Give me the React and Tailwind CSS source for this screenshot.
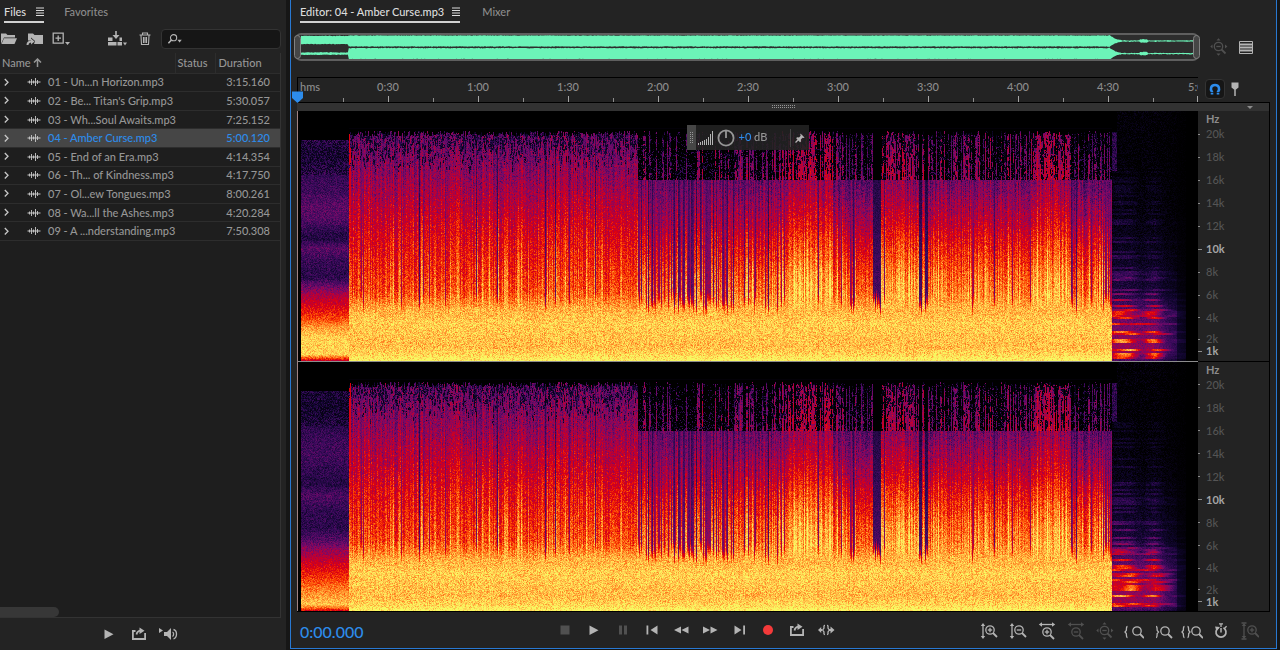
import React, { useEffect, useRef, useState } from 'react';

const files = [
  { name: '01 - Un...n Horizon.mp3', duration: '3:15.160' },
  { name: "02 - Be... Titan's Grip.mp3", duration: '5:30.057' },
  { name: '03 - Wh...Soul Awaits.mp3', duration: '7:25.152' },
  { name: '04 - Amber Curse.mp3', duration: '5:00.120' },
  { name: '05 - End of an Era.mp3', duration: '4:14.354' },
  { name: '06 - Th... of Kindness.mp3', duration: '4:17.750' },
  { name: '07 - Ol...ew Tongues.mp3', duration: '8:00.261' },
  { name: '08 - Wa...ll the Ashes.mp3', duration: '4:20.284' },
  { name: '09 - A ...nderstanding.mp3', duration: '7:50.308' },
];

const times = ['0:30', '1:00', '1:30', '2:00', '2:30', '3:00', '3:30', '4:00', '4:30'];
const freqs = ['20k', '18k', '16k', '14k', '12k', '10k', '8k', '6k', '4k'];

/* ---------- spectrogram ---------- */

const W = 900;
const H = 250;

const palette = [
  [0, 0, 0, 0],
  [0.12, 16, 6, 46],
  [0.25, 58, 10, 92],
  [0.38, 118, 10, 106],
  [0.5, 182, 0, 58],
  [0.6, 220, 0, 16],
  [0.7, 250, 62, 0],
  [0.8, 255, 130, 36],
  [0.9, 255, 196, 74],
  [0.97, 255, 232, 96],
  [1, 246, 250, 96],
];

const interp = (stops, t) => {
  if (t <= stops[0][0]) return stops[0][1];
  for (let i = 1; i < stops.length; i++) {
    if (t <= stops[i][0]) {
      const [a, va] = stops[i - 1];
      const [b, vb] = stops[i];
      return va + ((vb - va) * (t - a)) / (b - a);
    }
  }
  return stops[stops.length - 1][1];
};

const clamp = (v) => Math.max(0, Math.min(1, v));

const lut = Array.from({ length: 256 }, (_, i) =>
  [1, 2, 3].map((c) => interp(palette.map((p) => [p[0], p[c]]), i / 255))
);

const random = (seed) => () => {
  seed = (seed + 0x6d2b79f5) | 0;
  let t = Math.imul(seed ^ (seed >>> 15), 1 | seed);
  t = (t + Math.imul(t ^ (t >>> 7), 61 | t)) ^ t;
  return ((t ^ (t >>> 14)) >>> 0) / 4294967296;
};

// level per row while the band is playing
const body = [[20, 0.34], [45, 0.39], [65, 0.43], [85, 0.49], [105, 0.54], [130, 0.6], [160, 0.66], [180, 0.71], [190, 0.79], [198, 0.87], [212, 0.92], [235, 0.89], [243, 0.93], [249, 1]];
const introL = [[26, 0.24], [44, 0.16], [60, 0.23], [80, 0.25], [95, 0.32], [108, 0.3], [122, 0.19], [128, 0.18], [137, 0.32], [150, 0.23], [166, 0.2], [174, 0.34], [184, 0.48], [198, 0.62], [208, 0.72], [216, 0.84], [226, 0.92], [243, 0.93], [247, 0.7], [249, 0.55]];
const introR = [[26, 0.2], [44, 0.14], [60, 0.19], [80, 0.25], [95, 0.26], [108, 0.21], [122, 0.18], [134, 0.29], [150, 0.21], [166, 0.2], [178, 0.3], [190, 0.44], [204, 0.58], [214, 0.66], [222, 0.74], [232, 0.82], [243, 0.9], [247, 0.74], [249, 0.6]];

// [start, end, gain, chance of a quiet column, treble density]
const sections = [
  [52, 341, 0, 0.05, 1],
  [341, 437, -0.03, 0.55, 0.5],
  [437, 484, -0.05, 0.1, 0.6],
  [484, 535, 0.03, 0.03, 0.9],
  [535, 575, -0.06, 0.25, 0.5],
  [575, 583, 0, 1, 0],
  [583, 621, 0.03, 0.03, 0.85],
  [621, 624, 0, 1, 0.1],
  [624, 627, 0, 0, 0.6],
  [627, 630, 0, 1, 0.1],
  [630, 735, -0.03, 0.08, 0.55],
  [735, 773, 0.04, 0.01, 0.9],
  [773, 814, -0.07, 0.3, 0.5],
];

const drawSpectrogram = (ctx, right) => {
  const rnd = random(right ? 91 : 17);
  const cols = random(404);
  const img = ctx.createImageData(W, H);
  const intro = right ? introR : introL;

  const harmonics = Array.from({ length: H }, () => rnd());
  const bursts = [[813, 842, 0.16], [847, 858, 0.1], [853, 868, 0.12]];

  for (let x = 0; x < W; x++) {
    const s = sections.find((sec) => x >= sec[0] && x < sec[1]);
    const tone = (cols() - 0.5) * 0.16;
    const quiet = s ? cols() < s[3] : false;
    const full = s && s[3] === 1;
    const beat = s && ((x - 52) % 12 < 2 || cols() < 0.25) && cols() < 0.75 ? 0.05 + cols() * 0.1 : 0;
    const late = x >= 341;
    const tall = s ? cols() < s[4] : false;
    const sparse = cols();
    const top = 20 + Math.floor(cols() * 6);
    const quietBase = full ? 0.12 : 0.14 + cols() * 0.22;
    const quietEnd = 176 + cols() * 16;
    let run = 0;
    let gap = false;

    for (let y = 0; y < H; y++) {
      let v = 0;
      const n = rnd() + rnd() - 1;
      if (x < 4) {
        v = 0;
      } else if (x < 52) {
        if (y > 28) v = interp(intro, y) + n * 0.11;
        if (y > 28 && y < 64 && rnd() < 0.35) v *= 0.4;
      } else if (s) {
        if (y >= top) {
          const low = clamp((y - 182) / 18);
          v = interp(body, y) + tone * (1 - low * 0.85) + n * 0.13;
          v += s[2] * (1 - low);
          // fuller mids after the first verse
          if (late) v += 0.1 * clamp((y - 115) / 50) * (1 - low) - 0.05 * clamp((120 - y) / 40);
          v += beat * clamp((y - 80) / 80) * (1 - low);
          if (x < 54) v = Math.max(v, 0.6);
          if (quiet) {
            const q = quietBase + (y / H) * 0.22 + n * 0.07;
            const mix = clamp((y - quietEnd) / 14);
            v = q * (1 - mix) + v * mix;
          }
          // holes in the treble
          if (run <= 0) {
            const depth = late ? 0.25 + sparse * 0.65 - (y - 20) / 140 : 0.62 - (y - 20) / 62;
            gap = rnd() < depth;
            run = 1 + Math.floor(rnd() * 6);
          }
          run--;
          if (late && y < 69) {
            if (full) v = 0;
            else if (!tall || quiet) v = rnd() < 0.06 + (y - 20) / 200 ? 0.1 + rnd() * 0.18 : 0;
            else if (gap && rnd() < 0.85) v = rnd() * 0.12;
            else v += 0.08;
          } else if (!late && gap && rnd() < 0.86) {
            v *= 0.1 + rnd() * 0.5;
          }
        } else if (y === 17) {
          v = 0.02;
        }
      } else if (x < 819 && y < 60) {
        v = y > 20 ? 0.2 + n * 0.14 : 0;
      } else if (x < 888) {
        const fade = x < 855 ? 1 : Math.max(0, 1 - (x - 855) / 34);
        const low = interp([[60, 0.01], [100, 0.03], [150, 0.08], [180, 0.14], [200, 0.3], [225, 0.38], [240, 0.42], [249, 0.25]], y);
        const line = harmonics[y - (y % 2)];
        v = low + n * 0.08;
        if (line > 0.62) v += low * 0.7 * (0.5 + 0.5 * Math.sin(x / 5 + line * 40));
        bursts.forEach(([a, b, g]) => {
          if (x >= a && x < b && y > 56) v += g * (line > 0.55 ? 1 : 0.15) * (y / 200) * clamp((x - a) / 5 + 0.3) * clamp((b - x) / 10);
        });
        v *= 0.25 + fade * 0.75;
        if (x > 878) v *= 0.6;
      }
      const [r, g, b] = lut[Math.round(clamp(v) * 255)];
      const i = (y * W + x) * 4;
      img.data[i] = r;
      img.data[i + 1] = g;
      img.data[i + 2] = b;
      img.data[i + 3] = 255;
    }
  }
  ctx.putImageData(img, 0, 0);
};

const Spectrogram = ({ right, label }) => {
  const ref = useRef(null);
  useEffect(() => {
    drawSpectrogram(ref.current.getContext('2d'), right);
  }, [right]);
  return (
    <canvas
      ref={ref}
      width={W}
      height={H}
      role="img"
      aria-label={label}
      className="block h-full w-full [image-rendering:pixelated]"
    />
  );
};

const FrequencyAxis = () => (
  <div className="flex h-full flex-col text-[11px] text-[#555]">
    <div className="h-3 pl-2 leading-4 font-bold text-[#8c8c8c]">Hz</div>
    {freqs.map((f) => (
      <div key={f} className={`flex flex-1 items-center ${f === '10k' ? 'font-bold text-[#a5a5a5]' : ''}`}>
        <span className={`h-px bg-[#8c8c8c] ${f === '10k' ? 'w-1' : 'w-0.5'}`} />
        <span className={`leading-3 ${f === '10k' ? 'pl-1' : 'pl-1.5'}`}>{f}</span>
      </div>
    ))}
    <div className="h-[31px] pt-1">
      <div className="flex h-3 items-center">
        <span className="h-px w-0.5 bg-[#8c8c8c]" />
        <span className="pl-1.5 leading-3">2k</span>
      </div>
      <div className="flex h-3 items-center font-bold text-[#a5a5a5]">
        <span className="h-px w-1 bg-[#8c8c8c]" />
        <span className="pl-1 leading-3">1k</span>
      </div>
    </div>
  </div>
);

/* ---------- overview ---------- */

const overviewPaths = () => {
  const rnd = random(5);
  const band = (mid, half) => {
    const up = [];
    const down = [];
    for (let x = 0; x <= 896; x += 1) {
      const h = half(x);
      up.push(`${x},${(mid(x) - h - rnd() * 0.6).toFixed(1)}`);
      down.unshift(`${x},${(mid(x) + h + rnd() * 0.6).toFixed(1)}`);
    }
    return `M${up.join('L')}L${down.join('L')}Z`;
  };
  const tail = (x) => {
    if (x < 824) return 5.2 * ((824 - x) / 13) ** 2 + 0.6;
    if (x > 841 && x < 850) return 1.3;
    return 0.3;
  };
  return [
    band((x) => (x < 48 ? 5 : 6), (x) => (x < 48 ? 3.8 : x < 811 ? 5.2 : tail(x))),
    band(() => 18.6, (x) => (x < 48 ? 0.9 : x < 811 ? 5.2 : tail(x))),
  ];
};

const [topBand, bottomBand] = overviewPaths();

/* ---------- icons ---------- */

const Icon = ({ w = 18, h = 18, children }) => (
  <svg width={w} height={h} viewBox={`0 0 ${w} ${h}`} fill="none" stroke="currentColor" strokeWidth="1.3" aria-hidden="true">
    {children}
  </svg>
);

const Burger = () => (
  <Icon w={8} h={9}>
    <path d="M0 1h8M0 3.500h8M0 6h8M0 8.500h8" strokeWidth="1" />
  </Icon>
);

const Lens = ({ x = 9, y = 8, sign }) => (
  <g>
    <circle cx={x} cy={y} r="4.2" />
    <path d={`M${x + 3} ${y + 3}l4 4`} strokeWidth="1.8" />
    {sign && <path d={`M${x - 2.2} ${y}h4.4`} />}
    {sign === '+' && <path d={`M${x} ${y - 2.2}v4.4`} />}
  </g>
);

const VArrow = () => (
  <>
    <path d="M3 3v12" />
    <path d="M0.8 4L3 1l2.2 3zM0.8 14L3 17l2.2-3z" fill="currentColor" stroke="none" />
  </>
);

const HArrow = () => (
  <>
    <path d="M3 2.500h12" />
    <path d="M4 0.2L0.8 2.500 4 4.8zM14 0.2l3.2 2.3L14 4.8z" fill="currentColor" stroke="none" />
  </>
);

const ZoomFull = () => (
  <Icon>
    <Lens x={8.5} y={8.5} sign="-" />
    <path d="M6.5 2.500L8.500 0.3l2 2.2zM6.500 15.500l2 2.2 2-2.2zM2.500 6.500L0.3 8.500l2.2 2zM15 6.500l2.4 2-2.4 2z" fill="currentColor" stroke="none" />
  </Icon>
);

const Play = () => (
  <Icon>
    <path d="M4.5 4.500v9.500l9-4.750z" fill="currentColor" stroke="none" />
  </Icon>
);

const Loop = () => (
  <Icon>
    <path d="M5.500 6H2.900v8h12.200V8" strokeWidth="1.800" />
    <path d="M6.500 9.500c.5-2.500 1.500-3.800 4.500-3.800" strokeWidth="1.800" />
    <path d="M9.500 2.500l5 3.300-5 3.300z" fill="currentColor" stroke="none" />
  </Icon>
);

const Wave = () => (
  <Icon w={14} h={12}>
    <path d="M0.500 6h13" strokeWidth="1" />
    <path d="M2.500 4.500v3M4.500 3v6M6.500 4.500v3M8.500 2v8M10.500 4v4" strokeWidth="0.900" />
  </Icon>
);

const transport = [
  { label: 'Stop', off: true, icon: <Icon><path d="M4.500 4.500h9v9h-9z" fill="currentColor" stroke="none" /></Icon> },
  { label: 'Play', icon: <Play /> },
  { label: 'Pause', off: true, icon: <Icon><path d="M5 4.500h3v9H5zM10 4.500h3v9h-3z" fill="currentColor" stroke="none" /></Icon> },
  { label: 'Move to previous', icon: <Icon><path d="M3.500 4.500h1.800v9H3.500zM14.500 4.500v9l-7-4.500z" fill="currentColor" stroke="none" /></Icon> },
  { label: 'Rewind', icon: <Icon><path d="M9 5.500v7L2 9zM16.500 5.500v7l-7-3.500z" fill="currentColor" stroke="none" /></Icon> },
  { label: 'Fast forward', icon: <Icon><path d="M2 5.500v7l7-3.500zM9.500 5.500v7l7-3.500z" fill="currentColor" stroke="none" /></Icon> },
  { label: 'Move to next', icon: <Icon><path d="M4.500 4.500v9l7-4.500zM13.200 4.500H15v9h-1.800z" fill="currentColor" stroke="none" /></Icon> },
  { label: 'Record', icon: <Icon><circle cx="9" cy="9" r="5" fill="#f43a3a" stroke="none" /></Icon> },
  { label: 'Loop playback', icon: <Loop /> },
  {
    label: 'Skip selection',
    icon: (
      <Icon>
        <path d="M3 9h2M12 9h3" strokeWidth="1.800" />
        <path d="M4.200 6L1 9l3.200 3zM13.500 5.500L17.500 9l-4 3.500z" fill="currentColor" stroke="none" />
        <path d="M8 4.500c-1.500 0-1 1-1 2.500L5.700 9 7 11c0 1.500-.5 2.500 1 2.500M10 4.500c1.500 0 1 1 1 2.500l1.300 2-1.300 2c0 1.500.5 2.500-1 2.500" />
      </Icon>
    ),
  },
];

const zooms = [
  { label: 'Zoom in amplitude', icon: <Icon><VArrow /><Lens x={10} y={8} sign="+" /></Icon> },
  { label: 'Zoom out amplitude', icon: <Icon><VArrow /><Lens x={10} y={8} sign="-" /></Icon> },
  { label: 'Zoom in time', icon: <Icon><HArrow /><Lens x={9} y={10} sign="+" /></Icon> },
  { label: 'Zoom out time', off: true, icon: <Icon><HArrow /><Lens x={9} y={10} sign="-" /></Icon> },
  { label: 'Zoom out full', off: true, icon: <ZoomFull /> },
  { label: 'Zoom to in point', icon: <Icon w={20}><path d="M3.500 4.500C2 4.500 2.600 7 2.300 8.500L1 10l1.300 1.500c.3 1.500-.3 4 1.200 4" /><Lens x={13} y={9} /></Icon> },
  { label: 'Zoom to out point', icon: <Icon w={20}><path d="M3 4.500c1.500 0 .9 2.500 1.200 4L5.500 10l-1.300 1.500c-.3 1.500.3 4-1.200 4" /><Lens x={12} y={9} /></Icon> },
  { label: 'Zoom to selection', icon: <Icon w={22}><path d="M3.500 4.500C2 4.500 2.600 7 2.300 8.500L1 10l1.300 1.500c.3 1.500-.3 4 1.200 4M6.500 4.500c1.500 0 .9 2.500 1.200 4L9 10l-1.300 1.500c-.3 1.500.3 4-1.200 4" /><Lens x={15} y={9} /></Icon> },
  {
    label: 'Zoom timer',
    icon: (
      <Icon>
        <path d="M6.500 5.800a5 5 0 1 0 5 0" strokeWidth="1.700" />
        <path d="M9 6v4.500" strokeWidth="1.500" />
        <path d="M9 2v3M7 1.800h4M12.800 6l1.800-1.800" />
        <path d="M3 4.500l5 .5-3.500 4z" fill="currentColor" stroke="none" />
      </Icon>
    ),
  },
  { label: 'Zoom in track', off: true, icon: <Icon><VArrow /><path d="M0.500 1h5M0.500 17h5" /><Lens x={11} y={8} sign="+" /></Icon> },
];

const IconButton = ({ label, off, className = '', children }) => (
  <button type="button" aria-label={label} disabled={off} className={`flex items-center justify-center ${off ? 'text-[#505050]' : 'text-[#b4b4b4]'} ${className}`}>
    {children}
  </button>
);

const Tab = ({ active, children }) => (
  <button
    type="button"
    className={`flex h-[23px] items-center border-b-2 pt-0.5 ${active ? 'border-[#d2d2d2] text-[#dcdcdc]' : 'border-transparent text-[#8c8c8c]'}`}
  >
    {children}
  </button>
);

/* ---------- panels ---------- */

const FilesPanel = () => {
  const [selected, setSelected] = useState(3);
  const [query, setQuery] = useState('');

  return (
    <aside className="flex w-[286px] shrink-0 flex-col bg-[#232323]">
      <nav className="flex gap-5 pl-1">
        <Tab active><span className="mr-2.5">Files</span><Burger /></Tab>
        <Tab>Favorites</Tab>
      </nav>

      <div className="flex h-[30px] items-center pt-0.5 pr-[5px]">
        <IconButton label="Open file" className="w-[18px]">
          <Icon>
            <path d="M1 14V3.500h5L7.500 5H15v2.500H4z" fill="currentColor" stroke="none" />
            <path d="M4 8.200h13L14.500 14H1.500z" fill="currentColor" stroke="none" />
          </Icon>
        </IconButton>
        <IconButton label="Import file" className="ml-2 w-[18px]">
          <Icon>
            <path d="M2 3.500h5L8.500 5H17v9H8l1-3-4-3.500v3H2z" fill="currentColor" stroke="none" />
            <path d="M1.500 15c0-2.500 1.500-3.500 4-3.500" strokeWidth="2" />
            <path d="M5 8.500l3.500 3-3.500 3z" fill="currentColor" stroke="none" />
          </Icon>
        </IconButton>
        <IconButton label="New file" className="ml-2 w-[18px]">
          <Icon>
            <path d="M1.200 3.200h10v10h-10zM6.200 5.500v5.500M3.500 8.200H9" />
            <path d="M13 12h5l-2.500 3z" fill="currentColor" stroke="none" />
          </Icon>
        </IconButton>
        <IconButton label="Insert into multitrack" className="ml-auto w-5">
          <Icon w={20}>
            <path d="M1 7.500h4.500v3.500h7V7.500H15V11H1zM1 12h8.500v3.500H1zM10.500 12H15v3.500h-4.500z" fill="currentColor" stroke="none" />
            <path d="M9 1v5" strokeWidth="1.600" />
            <path d="M5.500 5h7L9 9z" fill="currentColor" stroke="none" />
            <path d="M16 12.500h4l-2 3z" fill="currentColor" stroke="none" />
          </Icon>
        </IconButton>
        <IconButton label="Delete" className="ml-[10px] w-4">
          <Icon w={14}>
            <path d="M1.500 5h11M4.500 4.500V3h5v1.500M3 5.500l.5 9h7l.5-9M5.500 7v6M7 7v6M8.500 7v6" strokeWidth="1.100" />
          </Icon>
        </IconButton>
        <label className="ml-2 flex h-5 w-[120px] items-center rounded-sm border border-[#333] bg-[#161616] pl-1.5 text-[#b4b4b4]">
          <Icon w={17} h={14}>
            <circle cx="6.500" cy="5.500" r="3.600" />
            <path d="M4 8.200L0.500 12" strokeWidth="1.800" />
            <path d="M11 8h5l-2.500 3z" fill="currentColor" stroke="none" />
          </Icon>
          <input
            type="text"
            aria-label="Search files"
            value={query}
            onChange={(e) => setQuery(e.target.value)}
            className="w-full min-w-0 bg-transparent px-1 outline-none"
          />
        </label>
      </div>

      <div className="mr-[5px] flex flex-1 flex-col border-r border-b border-[#333] bg-[#1e1e1e]">
        <table className="h-[188px] w-full table-fixed border-collapse text-[#969696]">
          <thead>
            <tr className="h-5 bg-[#232323] text-left">
              <th className="w-[175px] border-r border-[#2d2d2d] p-0 pl-0.5 font-medium">
                <span className="flex items-center gap-0.5">
                  Name
                  <Icon w={9} h={9}><path d="M4.500 1v8M1 4.500L4.500 1 8 4.500" strokeWidth="1.500" /></Icon>
                </span>
              </th>
              <th className="w-10 border-r border-[#2d2d2d] p-0 pl-0.5 font-medium">Status</th>
              <th className="p-0 pl-[3px] font-medium">Duration</th>
            </tr>
          </thead>
          <tbody>
            {files.map((f, i) => (
              <tr
                key={f.name}
                onClick={() => setSelected(i)}
                aria-selected={selected === i}
                className={`border-y border-[#2d2d2d] leading-4 ${selected === i ? 'bg-[#464646] text-[#2d8ceb]' : ''}`}
              >
                <td className="p-0" colSpan={2}>
                  <span className="flex items-center whitespace-nowrap">
                    <button type="button" aria-label={`Expand ${f.name}`} className="w-[27px] pl-1 text-[#c8c8c8]">
                      <Icon w={5} h={9}><path d="M0.800 1L4 4.200 0.800 7.500" /></Icon>
                    </button>
                    <span className="mr-[7px] text-[#c8c8c8]"><Wave /></span>
                    {f.name}
                  </span>
                </td>
                <td className="p-0 pr-[10px] text-right">{f.duration}</td>
              </tr>
            ))}
          </tbody>
        </table>
        <div className="mt-auto h-[10px] w-[59px] rounded-r-full bg-[#373737]" />
      </div>

      <div className="flex h-8 items-center justify-center pr-[9px]">
        <IconButton label="Play file" className="w-[30px]"><Play /></IconButton>
        <IconButton label="Loop file" className="w-[30px]"><Loop /></IconButton>
        <IconButton label="Auto-play" className="w-[30px]">
          <Icon w={20}>
            <path d="M0 3v5l4-2.500zM5 7h3l4-4v12l-4-4H5z" fill="currentColor" stroke="none" />
            <path d="M13.500 7c1.500.5 1.500 3.500 0 4.500M14.500 4.500c4 1 4 8 0 9.500" />
          </Icon>
        </IconButton>
      </div>
    </aside>
  );
};

const Ruler = () => (
  <div className="relative h-[25px] min-w-0 flex-1 border-t border-black text-[#8c8c8c]">
    <div className="flex h-full overflow-hidden border-l border-black">
      <span className="flex-1 indent-0.5 leading-[18px]">hms</span>
      {times.map((t) => (
        <div key={t} className="flex flex-2 flex-col justify-between">
          <span className="text-center leading-[18px]">{t}</span>
          <div className="flex items-end">
            <span className="h-1 w-px bg-[#8c8c8c]" />
            <span className="flex-1" />
            <span className="h-1.5 w-px bg-[#a5a5a5]" />
            <span className="flex-1" />
          </div>
        </div>
      ))}
      <div className="flex flex-1 flex-col justify-between">
        <span className="-mr-3 text-right leading-[18px]">5:00</span>
        <div className="flex items-end justify-between">
          <span className="h-1 w-px bg-[#8c8c8c]" />
          <span className="h-1.5 w-px bg-[#a5a5a5]" />
        </div>
      </div>
    </div>
    <svg width="11" height="12" viewBox="0 0 11 12" className="absolute -bottom-px -left-[5px]" aria-hidden="true">
      <path d="M0 0.500h11V7L5.500 12 0 7z" fill="#2d8ceb" />
    </svg>
  </div>
);

const Hud = () => (
  <div className="absolute top-[14px] left-1/2 flex h-[25px] w-[122px] -translate-x-1/2 items-center bg-[#222]/90 text-[#969696]">
    <svg width="9" height="25" viewBox="0 0 9 25" className="bg-[#464646]" aria-hidden="true">
      <path d="M3.500 7v11M5.500 7v11" stroke="#969696" strokeDasharray="1 1" strokeWidth="1" />
    </svg>
    <svg width="16" height="15" viewBox="0 0 16 15" className="ml-0.5" aria-hidden="true">
      <path d="M0.500 15v-2M2.500 15v-3M4.500 15v-4M6.500 15v-5M8.500 15V9M10.500 15V7M12.500 15V4M14.500 15V1" stroke="#b4b4b4" />
    </svg>
    <button type="button" aria-label="Gain" className="ml-[3px]">
      <svg width="18" height="18" viewBox="0 0 18 18" aria-hidden="true">
        <circle cx="9" cy="9" r="7.600" fill="none" stroke="#969696" strokeWidth="1.800" />
        <path d="M9 1v8" stroke="#969696" strokeWidth="1.800" />
      </svg>
    </button>
    <span className="ml-1 pb-0.5"><span className="text-[#2d8ceb]">+0</span> dB</span>
    <span className="ml-auto h-[18px] w-px bg-[#464646]" />
    <IconButton label="Pin" className="ml-1 mr-1">
      <Icon w={10} h={10}>
        <path d="M5.500 0.500l4 4-1 .5-1-.3-1.700 1.700.2 2-1 .8L1.200 5.300l.8-1 2 .2 1.700-1.700-.4-1z" fill="currentColor" stroke="none" />
        <path d="M0.500 9.500l3-3" />
      </Icon>
    </IconButton>
  </div>
);

const EditorPanel = () => (
  <main className="mr-[3px] mb-px ml-1 flex min-w-0 flex-1 flex-col border-x border-b border-[#2878d2] bg-[#232323] pl-1.5">
    <nav className="flex gap-[22px] pl-[3px]">
      <Tab active><span className="mr-2">Editor: 04 - Amber Curse.mp3</span><Burger /></Tab>
      <Tab>Mixer</Tab>
    </nav>

    <div className="mt-[10px] flex h-7 items-center pr-[23px]">
      <div className="relative -ml-0.5 h-7 min-w-0 flex-1 rounded-md border-2 border-[#5f5f5f] bg-[#2d2d2d]">
        <svg viewBox="0 0 897 24" preserveAspectRatio="none" className="block h-full w-full pr-0.5 pl-1" aria-label="Overview" role="img">
          <path d={topBand} fill="#6cf4b8" />
          <path d={bottomBand} fill="#6cf4b8" />
        </svg>
        <span className="absolute inset-y-0 -left-[3px] w-[7px] rounded-full border border-[#828282] bg-[#464646]" />
        <span className="absolute inset-y-0 -right-[3px] w-[7px] rounded-full border border-[#828282] bg-[#464646]" />
      </div>
      <IconButton label="Zoom out full" off className="ml-[11px] w-[18px]"><ZoomFull /></IconButton>
      <IconButton label="Show spectral display" className="ml-[11px] w-[14px]">
        <Icon w={14} h={13}>
          <path d="M0.500 0.500h13v12h-13z" strokeWidth="1" />
          <path d="M0 3.500h14M0 6.500h14M0 9.500h14" strokeWidth="2" />
        </Icon>
      </IconButton>
    </div>

    <div className="mt-4 flex items-start pr-[6px]">
      <Ruler />
      <div className="flex h-6 w-[72px] items-center pl-[7px]">
        <button type="button" aria-label="Snapping" className="flex h-5 w-5 items-center justify-center rounded-sm border border-[#333] bg-[#161616] text-[#2d8ceb]">
          <Icon w={14} h={14}>
            <path d="M6 12H3.500C0.500 8 1.500 2.500 7 2.500s6.500 5.500 3.500 9.500H8" stroke="none" />
            <path d="M4 12.500V10C1.800 7 3 3 7 3s5.200 4 3 7v2.500" strokeWidth="2.600" />
            <path d="M2 10.500h4M8 10.500h4" stroke="#161616" strokeWidth="0.700" />
          </Icon>
        </button>
        <IconButton label="Add marker" className="ml-[5px]">
          <Icon w={10} h={14}>
            <path d="M1.500 0.500h7v5L6 7.500H4L1.500 5.500z" fill="currentColor" stroke="none" />
            <path d="M5 7v7" strokeWidth="1.500" />
          </Icon>
        </IconButton>
      </div>
    </div>

    <div className="mr-[6px] flex min-h-0 flex-1 flex-col border-y border-r border-black">
      <div className="flex h-2 items-center bg-[#323232] pr-4">
        <span className="flex-1" />
        <svg width="24" height="4" viewBox="0 0 24 4" className="ml-[18px]" aria-hidden="true">
          <path d="M0 0.500h24M0 2.500h24" stroke="#969696" strokeDasharray="1 1" />
        </svg>
        <span className="flex flex-1 justify-end">
          <svg width="6" height="3" viewBox="0 0 6 3" aria-hidden="true"><path d="M0 0h6L3 3z" fill="#8c8c8c" /></svg>
        </span>
      </div>
      <div className="flex min-h-0 flex-1">
        <div className="relative flex min-w-0 flex-1 flex-col bg-black">
          <div className="min-h-0 flex-1"><Spectrogram label="Left channel spectrum" /></div>
          <div className="h-px bg-[#8c8c8c]" />
          <div className="min-h-0 flex-1"><Spectrogram right label="Right channel spectrum" /></div>
          <span className="absolute inset-y-0 left-0 w-px bg-[#a08282]" />
          <Hud />
        </div>
        <div className="flex w-[71px] flex-col">
          <div className="min-h-0 flex-1"><FrequencyAxis /></div>
          <div className="h-px bg-black" />
          <div className="min-h-0 flex-1"><FrequencyAxis /></div>
        </div>
      </div>
    </div>

    <footer className="flex h-9 items-center pr-3 pl-[3px]">
      <output className="w-[250px] pt-1 text-base leading-6 text-[#2d8ceb]">0:00.000</output>
      <div className="flex">
        {transport.map((b) => (
          <IconButton key={b.label} label={b.label} off={b.off} className="w-[29px]">{b.icon}</IconButton>
        ))}
      </div>
      <div className="ml-auto flex pt-0.5">
        {zooms.map((b) => (
          <IconButton key={b.label} label={b.label} off={b.off} className="w-[29px]">{b.icon}</IconButton>
        ))}
      </div>
    </footer>
  </main>
);

export default function App() {
  return (
    <div className="flex h-screen overflow-hidden bg-[#161616] font-['Lato','Noto_Sans',sans-serif] text-[11px] leading-4 font-medium">
      <FilesPanel />
      <EditorPanel />
    </div>
  );
}
